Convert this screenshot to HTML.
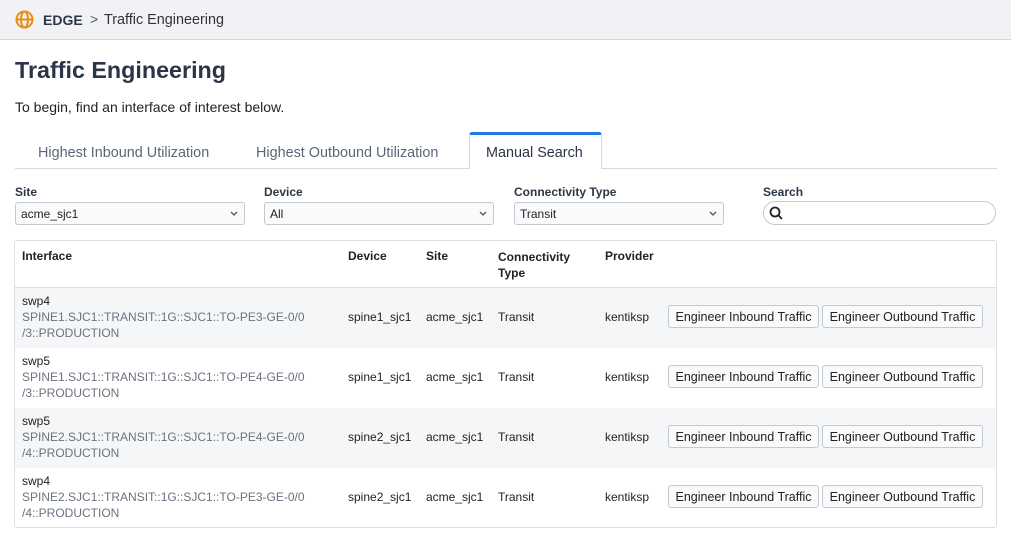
<!DOCTYPE html>
<html><head><meta charset="utf-8"><style>
*{box-sizing:border-box;margin:0;padding:0}
body{width:1011px;height:542px;background:#fff;font-family:"Liberation Sans",sans-serif;color:#1f2937;position:relative;overflow:hidden;font-size:12px}
.abs{position:absolute;white-space:nowrap}
.top{position:absolute;left:0;top:0;width:1011px;height:40px;background:#f1f2f5;border-bottom:1px solid #d3d6db}
.lbl{font-weight:bold;font-size:12px;color:#2d3748}
.sel{position:absolute;height:23px;border:1px solid #c5c9cf;border-radius:3px;background:#f9fafb;font-size:12px;padding:4px 5px;color:#222}
.sel svg{position:absolute;right:6px;top:8px}
.tab{position:absolute;top:145px;font-size:14.4px;color:#5a6778}
.tbl{position:absolute;left:14px;top:240px;width:983px;height:288px;border:1px solid #dcdfe3;border-radius:3px}
.row{position:absolute;left:0;width:981px;height:60px}
.g{background:#f5f6f8}
.th{font-weight:bold;color:#2d3748;font-size:12px}
.btn{position:absolute;height:23px;border:1px solid #c5c9cf;border-radius:3px;background:#f9fafb;font-size:12.5px;padding:4px 0;text-align:center;color:#222;white-space:nowrap}
.b1{left:653px;width:151px}.b2{left:807px;width:161px}
.c{position:absolute;font-size:12px;color:#222;white-space:nowrap}
.sub{color:#6b7280;line-height:16px}
</style></head><body>
<div class="top">
<svg class="abs" style="left:15px;top:10px" width="19" height="19" viewBox="0 0 19 19" fill="none" stroke="#f08a12" stroke-width="2"><circle cx="9.5" cy="9.5" r="8"/><line x1="1.5" y1="9.5" x2="17.5" y2="9.5"/><ellipse cx="9.5" cy="9.5" rx="3.5" ry="8"/></svg>
<div class="abs" style="left:43px;top:12px;font-size:14px;font-weight:bold;color:#2d3748">EDGE</div>
<div class="abs" style="left:90px;top:11px;font-size:14px;color:#555">&gt;</div>
<div class="abs" style="left:104px;top:12px;font-size:14.4px;color:#333">Traffic Engineering</div>
</div>
<div class="abs" style="left:15px;top:57px;font-size:23.3px;font-weight:bold;color:#2a3547">Traffic Engineering</div>
<div class="abs" style="left:15px;top:99px;font-size:14px;color:#222">To begin, find an interface of interest below.</div>
<div class="abs" style="left:15px;top:168px;width:982px;height:1px;background:#d6d9de"></div>
<div class="tab" style="left:38px">Highest Inbound Utilization</div>
<div class="tab" style="left:256px">Highest Outbound Utilization</div>
<div class="abs" style="left:469px;top:132px;width:133px;height:37px;background:#fff;border:1px solid #d6d9de;border-bottom:none;border-top:3px solid #1f7ae0;border-radius:3px 3px 0 0"></div>
<div class="tab" style="left:486px;color:#2a3547">Manual Search</div>

<div class="abs lbl" style="left:15px;top:185px">Site</div>
<div class="abs lbl" style="left:264px;top:185px">Device</div>
<div class="abs lbl" style="left:514px;top:185px">Connectivity Type</div>
<div class="abs lbl" style="left:763px;top:185px">Search</div>
<div class="sel" style="left:15px;top:202px;width:230px">acme_sjc1<svg width="8" height="5" viewBox="0 0 8 5"><path d="M1 1l3 3 3-3" stroke="#555" fill="none" stroke-width="1.3"/></svg></div>
<div class="sel" style="left:264px;top:202px;width:230px">All<svg width="8" height="5" viewBox="0 0 8 5"><path d="M1 1l3 3 3-3" stroke="#555" fill="none" stroke-width="1.3"/></svg></div>
<div class="sel" style="left:514px;top:202px;width:210px">Transit<svg width="8" height="5" viewBox="0 0 8 5"><path d="M1 1l3 3 3-3" stroke="#555" fill="none" stroke-width="1.3"/></svg></div>
<div class="abs" style="left:763px;top:201px;width:233px;height:24px;border:1px solid #c5c9cf;border-radius:12px;background:#fff"><svg style="position:absolute;left:5px;top:4px" width="14" height="14" viewBox="0 0 14 14" fill="none" stroke="#222" stroke-width="1.8"><circle cx="6" cy="6" r="4.5"/><line x1="9.3" y1="9.3" x2="13" y2="13"/></svg></div>

<div class="tbl">
<div class="c th" style="left:7px;top:8px">Interface</div>
<div class="c th" style="left:333px;top:8px">Device</div>
<div class="c th" style="left:411px;top:8px">Site</div>
<div class="c th" style="left:483px;top:8px;line-height:16px">Connectivity<br>Type</div>
<div class="c th" style="left:590px;top:8px">Provider</div>
<div class="abs" style="left:0;top:46px;width:981px;height:1px;background:#dcdfe3"></div>

<div class="row g" style="top:47px">
<div class="c sub" style="left:7px;top:5px"><span style="color:#222">swp4</span><br>SPINE1.SJC1::TRANSIT::1G::SJC1::TO-PE3-GE-0/0<br>/3::PRODUCTION</div>
<div class="c" style="left:333px;top:22px">spine1_sjc1</div><div class="c" style="left:411px;top:22px">acme_sjc1</div><div class="c" style="left:483px;top:22px">Transit</div><div class="c" style="left:590px;top:22px">kentiksp</div>
<div class="btn b1" style="top:17px">Engineer Inbound Traffic</div><div class="btn b2" style="top:17px">Engineer Outbound Traffic</div></div>

<div class="row" style="top:107px">
<div class="c sub" style="left:7px;top:5px"><span style="color:#222">swp5</span><br>SPINE1.SJC1::TRANSIT::1G::SJC1::TO-PE4-GE-0/0<br>/3::PRODUCTION</div>
<div class="c" style="left:333px;top:22px">spine1_sjc1</div><div class="c" style="left:411px;top:22px">acme_sjc1</div><div class="c" style="left:483px;top:22px">Transit</div><div class="c" style="left:590px;top:22px">kentiksp</div>
<div class="btn b1" style="top:17px">Engineer Inbound Traffic</div><div class="btn b2" style="top:17px">Engineer Outbound Traffic</div></div>

<div class="row g" style="top:167px">
<div class="c sub" style="left:7px;top:5px"><span style="color:#222">swp5</span><br>SPINE2.SJC1::TRANSIT::1G::SJC1::TO-PE4-GE-0/0<br>/4::PRODUCTION</div>
<div class="c" style="left:333px;top:22px">spine2_sjc1</div><div class="c" style="left:411px;top:22px">acme_sjc1</div><div class="c" style="left:483px;top:22px">Transit</div><div class="c" style="left:590px;top:22px">kentiksp</div>
<div class="btn b1" style="top:17px">Engineer Inbound Traffic</div><div class="btn b2" style="top:17px">Engineer Outbound Traffic</div></div>

<div class="row" style="top:227px">
<div class="c sub" style="left:7px;top:5px"><span style="color:#222">swp4</span><br>SPINE2.SJC1::TRANSIT::1G::SJC1::TO-PE3-GE-0/0<br>/4::PRODUCTION</div>
<div class="c" style="left:333px;top:22px">spine2_sjc1</div><div class="c" style="left:411px;top:22px">acme_sjc1</div><div class="c" style="left:483px;top:22px">Transit</div><div class="c" style="left:590px;top:22px">kentiksp</div>
<div class="btn b1" style="top:17px">Engineer Inbound Traffic</div><div class="btn b2" style="top:17px">Engineer Outbound Traffic</div></div>
</div>
</body></html>
